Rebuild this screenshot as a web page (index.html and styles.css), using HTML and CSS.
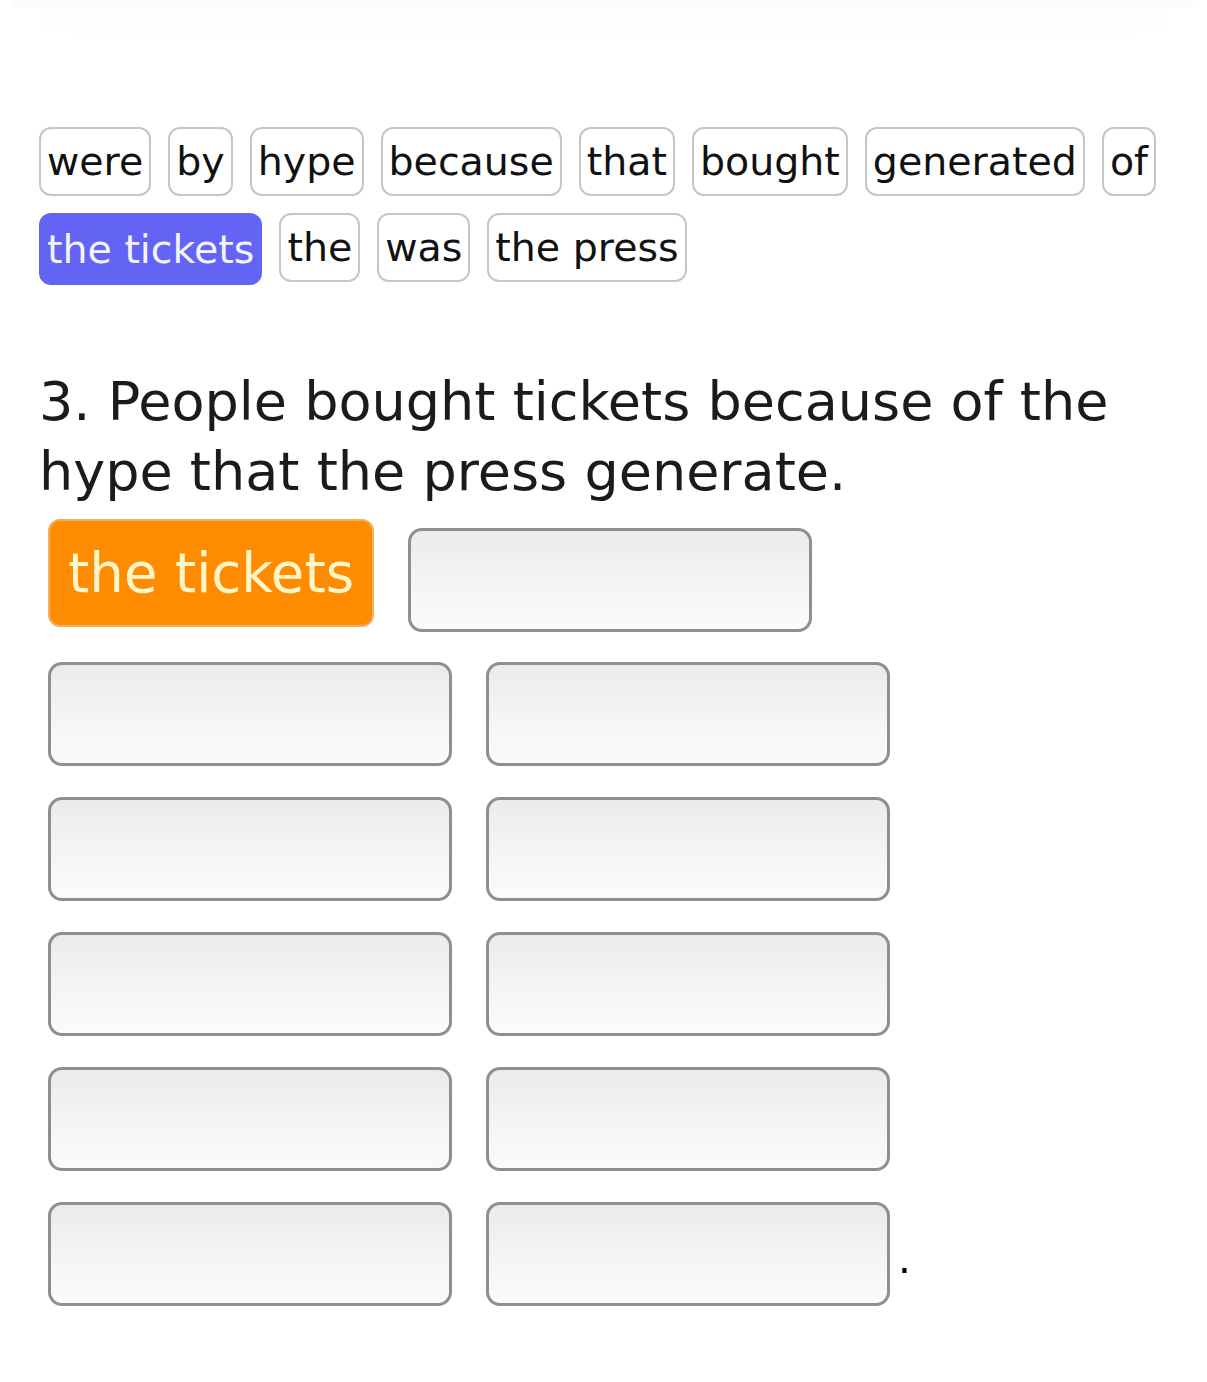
FILE: index.html
```html
<!DOCTYPE html>
<html>
<head>
<meta charset="utf-8">
<link rel="stylesheet" href="styles.css">
</head>
<body>
<div class="topcard"></div>
<div class="page">
  <div class="bank">
    <span class="chip">were</span>
    <span class="chip">by</span>
    <span class="chip">hype</span>
    <span class="chip">because</span>
    <span class="chip">that</span>
    <span class="chip">bought</span>
    <span class="chip">generated</span>
    <span class="chip">of</span>
    <span class="chip chip-active">the tickets</span>
    <span class="chip">the</span>
    <span class="chip">was</span>
    <span class="chip">the press</span>
  </div>
  <h2 class="question">3. People bought tickets because of the hype that the press generate.</h2>
  <div class="answer">
    <div class="first-row">
      <div class="placed">the tickets</div>
      <div class="slot"></div>
    </div>
    <div class="slots">
      <div class="slot"></div>
      <div class="slot"></div>
      <div class="slot"></div>
      <div class="slot"></div>
      <div class="slot"></div>
      <div class="slot"></div>
      <div class="slot"></div>
      <div class="slot"></div>
      <div class="slot"></div>
      <div class="slot-end"><div class="slot"></div><span class="dot">.</span></div>
    </div>
  </div>
</div>
</body>
</html>
```

FILE: styles.css
```css
html, body {
  margin: 0;
  padding: 0;
  background: #ffffff;
}
body {
  width: 1207px;
  height: 1382px;
  overflow: hidden;
  font-family: "DejaVu Sans", sans-serif;
  color: #111;
}
.topcard {
  height: 8px;
  margin: 0 12px;
  background: #fcfcfc;
  border-radius: 0 0 30px 30px;
  box-shadow: 0 14px 50px rgba(0, 0, 0, 0.035);
}
.page {
  padding: 119px 0 0 39px;
}
.bank {
  display: flex;
  flex-wrap: wrap;
  column-gap: 17px;
  row-gap: 17px;
  width: 1140px;
}
.chip {
  box-sizing: border-box;
  height: 69px;
  line-height: 65px;
  padding: 0 6px;
  border: 2px solid #c6c6c6;
  border-radius: 12px;
  font-size: 39.5px;
  color: #111;
  background: #fff;
}
.chip-active {
  background: #6363f4;
  border-color: #6363f4;
  color: #f4f4ff;
  height: 72px;
  line-height: 68px;
}
.question {
  margin: 82px 0 0 0;
  font-weight: 400;
  font-size: 54px;
  line-height: 70px;
  color: #1b1b1b;
  width: 1120px;
}
.answer {
  margin-top: 12px;
  padding-left: 9px;
}
.first-row {
  display: flex;
  align-items: flex-start;
  gap: 34px;
}
.placed {
  box-sizing: border-box;
  height: 108px;
  line-height: 104px;
  padding: 0 18px;
  background: #ff8c00;
  border: 2px solid #f0b060;
  border-radius: 12px;
  color: #fff6c8;
  font-size: 54.5px;
}
.first-row .slot {
  margin-top: 9px;
}
.slot {
  box-sizing: border-box;
  flex-shrink: 0;
  width: 404px;
  height: 104px;
  border: 3px solid #8f8f8f;
  border-radius: 14px;
  background: linear-gradient(to bottom, #ebebeb 0%, #f4f4f4 50%, #fbfbfb 100%);
}
.slots {
  margin-top: 30px;
  display: grid;
  grid-template-columns: 404px 404px;
  column-gap: 34px;
  row-gap: 31px;
}
.slot-end {
  display: flex;
  align-items: center;
}
.dot {
  font-size: 40px;
  margin-left: 8px;
  margin-top: 10px;
  color: #000;
}
```
